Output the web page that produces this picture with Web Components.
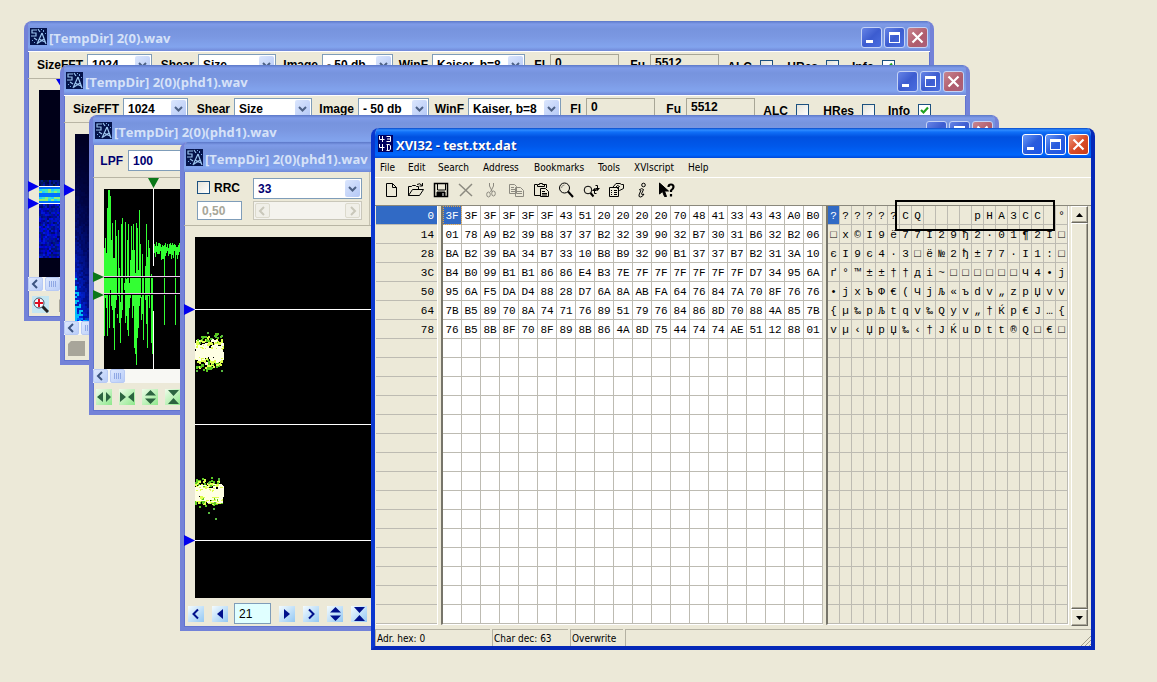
<!DOCTYPE html>
<html lang="en">
<head>
<meta charset="utf-8">
<title>XVI32 - test.txt.dat</title>
<style>
  html, body { height: 100%; }
  body { margin: 0; overflow: hidden; background: #ece9d8; font: bold 12px/14px "Liberation Sans", Arial, sans-serif; color: #000; }
</style>
</head>
<body>
<desk-top></desk-top>

<script>
const define = (name, html, setup) => {
  const tpl = document.createElement('template');
  tpl.innerHTML = html;
  customElements.define(name, class extends HTMLElement {
    connectedCallback() {
      if (this.shadowRoot) return;
      const root = this.attachShadow({ mode: 'open' });
      root.append(tpl.content.cloneNode(true));
      if (setup) setup(this, root);
    }
  });
};

// Small seeded generator, so that the plots are the same on every load.
const seeded = (seed) => () => {
  seed = (seed * 1664525 + 1013904223) % 4294967296;
  return seed / 4294967296;
};
const rect = (x, y, w, h, fill) => `<rect x="${x}" y="${y}" width="${w}" height="${h}" fill="${fill}"/>`;

/* ---------- window frame ---------- */
define('xp-window', `
<style>
  :host { --edge: #7382d8; display: flex; flex-direction: column; box-sizing: border-box; overflow: hidden;
    border-radius: 8px 8px 0 0; background: #ece9d8;
    border: 4px solid var(--edge); border-top: 0; box-shadow: inset 0 0 0 1px #6173cf; }
  header { display: flex; align-items: center; flex: none; height: 30px; margin: 0 -4px; padding: 2px 6px 0 6px; box-sizing: border-box;
    background: linear-gradient(#5c78c8 0, #7f9be8 3px, #7794de 8px, #7b98e2 16px, #82a4ee 26px, #7088d8 30px); }
  h1 { flex: 1; margin: 2px 0 0; padding-left: 2px; font: bold 13px/16px "Open Sans", "Noto Sans", sans-serif; color: #d6e2f8; white-space: nowrap; }
  .icon { display: flex; width: 17px; height: 17px; margin-top: -2px; }
  nav { display: flex; gap: 2px; }
  button { width: 21px; height: 21px; padding: 0; border: 1px solid #c5d3f5; border-radius: 3px; background: linear-gradient(135deg, #6684e6, #3c5cd0 50%, #4a6ee0); }
  button.close { background: linear-gradient(135deg, #c8858f, #b05c6c 60%, #a9607c); }
  svg { display: block; }
  main { flex: 1; min-height: 0; display: flex; flex-direction: column; }
  :host([active]) { --edge: #0a3bd6; box-shadow: none; border-color: #0a37cf; border-bottom-color: #0528b8; border-right-color: #0528b8; }
  :host([active]) header { background: linear-gradient(#0848c8 0, #2f8cff 2px, #1070f8 4px, #0050e0 9px, #0058ea 18px, #0066fc 27px, #0048d8 30px); }
  :host([active]) h1 { color: #fff; text-shadow: 1px 1px #0a2a90; }
  :host([active]) button { border-color: #fff; background: linear-gradient(135deg, #6a9af8, #2a5cdc 50%, #1c56e8); }
  :host([active]) button.close { background: linear-gradient(135deg, #ee9a80, #d94c28 50%, #c83c18); }
</style>
<header>
  <span class="icon"><slot name="icon"></slot></span>
  <h1></h1>
  <nav>
    <button type="button" aria-label="Minimize"><svg width="19" height="19"><path d="M4 12h7v3H4z" fill="#fff"/></svg></button>
    <button type="button" aria-label="Maximize"><svg width="19" height="19"><path d="M4 4h11v11H4zM5 7v7h9V7z" fill="#fff" fill-rule="evenodd"/></svg></button>
    <button type="button" class="close" aria-label="Close"><svg width="19" height="19"><path d="M4.500 4.500l10 10M14.500 4.500l-10 10" stroke="#fff" stroke-width="2.200"/></svg></button>
  </nav>
</header>
<main><slot></slot></main>`, (el, root) => { root.querySelector('h1').textContent = el.getAttribute('caption'); });

define('dish-icon', `
<style>:host { display: block; width: 17px; height: 17px; } svg { display: block; }</style>
<svg width="17" height="17" aria-hidden="true">
  <rect width="17" height="17" fill="#04134a"/>
  <path d="M7 2H2v3h4v3H1M8 1l2 3M12 5L7 16M12 5l4 11M9 11l6 3M14 11l-6 4M4 10l3 2" fill="none" stroke="#9cc4ee" stroke-width="1.200"/>
  <path d="M11 1h1v1h-1zM13 2h1v2h-1zM15 5h1v1h-1zM2 12h1v1H2zM4 14h1v1H4z" fill="#7aa8e0"/>
</svg>`);

define('hex-icon', `
<style>:host { display: block; width: 17px; height: 17px; } svg { display: block; }</style>
<svg width="17" height="17" aria-hidden="true">
  <rect x="1" width="15" height="17" fill="#000060"/>
  <path d="M2.500 1v3.500h5M5.500 1v6M9.500 1.500h4v5h-4M10 4h4M2.500 9v3.500h5M5.500 9v7M9.500 9.500h3l1 1.500v3l-1 1.500h-3M10.500 9v6" fill="none" stroke="#fff" stroke-width="1"/>
</svg>`);

/* ---------- form controls ---------- */
define('xp-combo', `
<style>
  :host { display: block; }
  label { display: flex; align-items: center; }
  .text { width: var(--label, 0); box-sizing: border-box; padding-right: 4px; text-align: right; white-space: nowrap; }
  .text:empty { padding: 0; }
  .box { position: relative; width: var(--width); height: 21px; }
  select { appearance: none; width: 100%; height: 100%; margin: 0; padding: 0 18px 0 4px; border: 1px solid #7f9db9; border-radius: 0; background: #fff; font: inherit; color: inherit; box-sizing: border-box; }
  i { position: absolute; top: 2px; right: 2px; width: 15px; height: 17px; border-radius: 2px; background: linear-gradient(135deg, #dbe6fd, #b4c8f6); pointer-events: none; }
</style>
<label><span class="text"></span><span class="box"><select><option></option></select>
<i><svg width="15" height="17"><path d="M4 7l3.500 3.500L11 7" fill="none" stroke="#4d6185" stroke-width="2"/></svg></i></span></label>`,
(el, root) => {
  root.querySelector('.text').textContent = el.getAttribute('label') || '';
  root.querySelector('option').textContent = el.getAttribute('value');
  if (!el.hasAttribute('label')) root.querySelector('select').setAttribute('aria-label', el.getAttribute('name'));
});

define('xp-text', `
<style>
  :host { display: block; }
  label { display: flex; align-items: center; }
  span { width: var(--label, 0); box-sizing: border-box; padding-right: 5px; text-align: right; white-space: nowrap; }
  span:empty { padding: 0; }
  input { width: var(--width); height: var(--height, 21px); box-sizing: border-box; margin: 0; padding: 0 4px; border: 1px solid #7f9db9; background: var(--fill, #fff); font: inherit; color: inherit; }
  :host([flat]) input { border-color: #a8a696; background: #ece9d8; padding-bottom: 3px; }
  input:disabled { color: #a8a698; }
</style>
<label><span></span><input type="text"></label>`,
(el, root) => {
  const input = root.querySelector('input');
  root.querySelector('span').textContent = el.getAttribute('label') || '';
  input.value = el.getAttribute('value');
  input.disabled = el.hasAttribute('disabled');
  if (!el.hasAttribute('label')) input.setAttribute('aria-label', el.getAttribute('name'));
});

define('xp-check', `
<style>
  :host { display: block; }
  label { display: flex; align-items: center; height: 21px; }
  span { width: var(--label); box-sizing: border-box; padding-right: 8px; text-align: right; }
  :host([after]) label { flex-direction: row-reverse; justify-content: flex-end; height: 19px; }
  :host([after]) span { padding: 0 0 0 4px; text-align: left; }
  input { appearance: none; width: 13px; height: 13px; margin: 0; border: 1px solid #1c5180; background: linear-gradient(135deg, #e4e3da, #fff); }
  :host(:not([after])) label { padding-top: 2px; }
  input:checked { background: #fff url("data:image/svg+xml,%3Csvg xmlns='http://www.w3.org/2000/svg' width='11' height='11'%3E%3Cpath d='M2 5l2.500 2.500L9 2.500' fill='none' stroke='%2321a121' stroke-width='2.200'/%3E%3C/svg%3E"); }
</style>
<label><span></span><input type="checkbox"></label>`,
(el, root) => {
  root.querySelector('span').textContent = el.getAttribute('label');
  root.querySelector('input').checked = el.hasAttribute('checked');
});

define('luna-scroll', `
<style>
  :host { display: flex; height: 14px; background: #f8f8f4; gap: 2px; }
  button { width: 15px; height: 14px; padding: 0; border: 1px solid #b8caf4; border-radius: 2px; background: linear-gradient(135deg, #dde8fe, #b9cdf8); }
  svg { display: block; }
  .end { margin-left: auto; display: none; }
  :host([disabled]) { height: 19px; border: 1px solid #c9c7ba; box-sizing: border-box; padding: 1px; background: #f4f3ee; }
  :host([disabled]) button { height: 15px; background: #f0efe8; border-color: #dcdacd; --arrow: #c9c7ba; }
  :host([disabled]) .thumb { display: none; }
  :host([disabled]) .end { display: block; }
</style>
<button type="button" aria-label="Scroll left"><svg width="13" height="12"><path d="M8 2L4 6l4 4" fill="none" stroke="var(--arrow, #3c5480)" stroke-width="2"/></svg></button>
<button type="button" class="thumb" aria-label="Thumb"><svg width="13" height="12"><path d="M3.500 3v6M5.500 3v6M7.500 3v6M9.500 3v6" stroke="#8fa8e4"/></svg></button>
<button type="button" class="end" aria-label="Scroll right"><svg width="13" height="12"><path d="M5 2l4 4-4 4" fill="none" stroke="var(--arrow, #3c5480)" stroke-width="2"/></svg></button>`);

const glyphs = {
  wide: '<path d="M7 3v10L1 8zM10 3v10l5-5z"/>',
  narrow: '<path d="M1 3v10l6-5zM15 3v10L9 8z"/>',
  tall: '<path d="M3 6.500h11L8.500 1zM3 9.500h11L8.500 15z"/>',
  flat: '<path d="M3 1h11L8.500 7zM3 15h11L8.500 9z"/>',
  first: '<path d="M10 3.500L5.500 8l4.500 4.500" fill="none" stroke="currentColor" stroke-width="2"/>',
  last: '<path d="M6 3.500L10.500 8 6 12.500" fill="none" stroke="currentColor" stroke-width="2"/>',
  back: '<path d="M11 3v10L5 8z"/>',
  next: '<path d="M5 3v10l6-5z"/>'
};
define('glyph-button', `
<style>
  :host { display: block; color: #2c6440; --tint: linear-gradient(135deg, #effcea, #8ee88c); }
  :host([blue]) { color: #00108c; --tint: linear-gradient(135deg, #f4fcff, #94c8f4); }
  button { display: block; width: 16px; height: 16px; padding: 0; border: 0; background: var(--tint); color: inherit; }
  svg { display: block; fill: currentColor; }
</style>
<button type="button"><svg width="16" height="16"></svg></button>`,
(el, root) => {
  const kind = el.getAttribute('kind');
  root.querySelector('button').setAttribute('aria-label', kind);
  root.querySelector('svg').innerHTML = glyphs[kind];
});

/* ---------- spectrum window ---------- */
define('spectrum-plot', `
<style>:host { display: block; height: 198px; overflow: hidden; } svg { display: block; width: 100%; height: 198px; }</style>
<svg aria-label="Spectrum"></svg>`, (el, root) => {
  const rnd = seeded(7);
  let out = '<rect x="11" y="11" width="100%" height="187" fill="#000018"/>';
  if (el.getAttribute('kind') === 'band') {
    for (let y = 101; y < 178; y += 2) for (let x = 11; x < 61; x += 2) {
      const blue = Math.round(110 + rnd() * 130 - (y < 106 ? 60 : 0));
      out += rect(x, y, 2, 2, `rgb(0,${Math.round(rnd() * 30)},${blue})`);
    }
    for (let y = 108; y < 123; y += 2) for (let x = 11; x < 61; x += 3) {
      const hot = y === 110 || y === 112 || y === 118 || y === 120;
      out += rect(x, y, 3, 2, hot ? ['#40e8c0', '#90f070', '#20d0ff'][Math.floor(rnd() * 3)] : '#0070ff');
    }
    out += rect(11, 107, '100%', 1, '#fff') + rect(11, 124, '100%', 1, '#fff');
    out += '<path d="M0 102v11l11-5.500zM0 119v11l11-5.500zM28 0h10l-5 8z" fill="#00e"/>';
  } else {
    for (let y = 11; y < 198; y += 2) for (let x = 11; x < 45; x += 2) {
      const low = y / 198, left = (45 - x) / 34;
      const heat = low * low * left * left * (0.5 + rnd() * 0.6);
      const floor = y > 194 ? 200 : 0;
      out += rect(x, y, 2, 2, `rgb(0,${Math.round(Math.min(230, Math.max(heat > 0.62 ? 190 : heat * 60, floor * rnd())))},${Math.round(Math.min(255, 30 + heat * 230 + low * 60 + floor * rnd()))})`);
    }
    out += '<path d="M0 61v12l11-6z" fill="#00e"/>';
  }
  root.querySelector('svg').innerHTML = out;
});

define('spectrum-view', `
<style>
  :host { display: block; }
  .tools { display: flex; height: 28px; box-sizing: border-box; padding: 2px 0 0 8px; border-bottom: 1px solid #b8b5a4; border-top: 1px solid #fff; }
  footer { display: flex; gap: 10px; padding: 5px 0 0 4px; }
  footer svg { display: block; }
</style>
<div class="tools">
  <xp-combo label="SizeFFT" value="1024" style="--label:51px;--width:65px"></xp-combo>
  <xp-combo label="Shear" value="Size" style="--label:46px;--width:78px"></xp-combo>
  <xp-combo label="Image" value="- 50 db" style="--label:46px;--width:71px"></xp-combo>
  <xp-combo label="WinF" value="Kaiser, b=8" style="--label:39px;--width:93px"></xp-combo>
  <xp-text flat label="Fl" value="0" style="--label:25px;--width:69px"></xp-text>
  <xp-text flat label="Fu" value="5512" style="--label:31px;--width:69px"></xp-text>
  <xp-check label="ALC" style="--label:41px"></xp-check>
  <xp-check label="HRes" style="--label:53px"></xp-check>
  <xp-check label="Info" checked style="--label:43px"></xp-check>
</div>
<div class="plot"></div>
<luna-scroll></luna-scroll>
<footer></footer>`, (el, root) => {
  const kind = el.getAttribute('kind');
  root.querySelector('.plot').innerHTML = `<spectrum-plot kind="${kind}"></spectrum-plot>`;
  const block = '<svg width="17" height="17"><path d="M3 1h14v15H0V4z" fill="#a8a59a"/></svg>';
  root.querySelector('footer').innerHTML = kind === 'band'
    ? `<svg width="17" height="17"><rect width="17" height="17" fill="#c4e6f2"/><path d="M10 10l6 6" stroke="#222" stroke-width="3"/><circle cx="7" cy="7" r="5" fill="#f6fbff" stroke="#456"/><path d="M3 7h8M7 3v8" stroke="#e01020" stroke-width="2"/></svg>${block}`
    : block;
});

/* ---------- filter window ---------- */
define('wave-plot', `
<style>:host { display: block; height: 191px; overflow: hidden; } svg { display: block; width: 100%; height: 191px; }</style>
<svg aria-label="Waveform"></svg>`, (el, root) => {
  const tops = [70,60,75,30,12,12,18,30,45,80,60,42,58,75,52,90,85,46,40,120,105,44,40,62,46,58,82,48,50,46,72,66,45,50,38,32,66,78,76,98,92,88,46,50,62,70,84,96,100];
  const ends = [158,120,130,158,115,150,112,128,132,150,172,130,122,140,118,145,165,140,132,120,112,145,138,152,158,130,120,116,140,128,170,176,187,160,150,128,120,142,136,162,130,122,146,170,118,130,140,165,176];
  const rnd = seeded(19);
  let out = '<rect x="11" y="11" width="100%" height="180" fill="#000"/>';
  tops.forEach((t, i) => {
    out += rect(11 + i, t, 1, ends[i] - t, '#33ff33');
    if (i % 3 === 1 && i > 6) out += rect(11 + i, t, 1, 20 + Math.round(rnd() * 50), '#000');
  });
  out += rect(60, 11, 1, 180, '#fff') + rect(60, 88, 1, 45, '#000');
  for (let i = 0; i < 120; i++) {
    const spike = [10, 21].includes(i % 26);
    const t = 64 + Math.round(rnd() * 6);
    out += rect(61 + i, t, 1, spike ? 80 : 6 + Math.round(rnd() * 8), '#33ff33');
  }
  out += '<path d="M11 99.500h200M11 116.500h200" stroke="#000"/><path d="M11 98.500h200M11 115.500h200" stroke="#f0c8f0"/>';
  out += '<path d="M0 94v10l11-5zM0 112v10l11-5zM55 0h11l-5.500 10z" fill="#0a7818"/>';
  root.querySelector('svg').innerHTML = out;
});

define('filter-view', `
<style>
  :host { display: block; }
  .tools { height: 33px; box-sizing: border-box; padding: 5px 0 0 2px; border-bottom: 1px solid #b8b5a4; color: #000070; }
  footer { display: flex; gap: 7px; padding: 6px 0 0 3px; }
</style>
<div class="tools"><xp-text label="LPF" value="100" style="--label:33px;--width:69px"></xp-text></div>
<wave-plot></wave-plot>
<luna-scroll></luna-scroll>
<footer>
  <glyph-button kind="wide"></glyph-button><glyph-button kind="narrow"></glyph-button>
  <glyph-button kind="tall"></glyph-button><glyph-button kind="flat"></glyph-button>
</footer>`);

/* ---------- phase window ---------- */
define('phase-plot', `
<style>:host { display: block; height: 372px; overflow: hidden; } svg { display: block; width: 100%; height: 372px; }</style>
<svg aria-label="Phase plot"></svg>`, (el, root) => {
  const rnd = seeded(42);
  let out = '<rect x="11" y="11" width="100%" height="361" fill="#000"/>';
  const cloud = (cy, spread, total) => {
    const dots = [];
    for (let i = 0; i < total; i++) {
      const d = (rnd() + rnd() - 1) * spread;
      dots.push([11 + Math.floor(rnd() * 27), Math.round(cy + d), Math.abs(d) / spread]);
    }
    dots.sort((a, b) => b[2] - a[2]);
    for (const [x, y, d] of dots) {
      const tone = rnd() * 0.6 + d;
      out += rect(x, y, tone < 0.7 && x < 38 ? 3 : 2, tone < 0.7 ? 3 : 2, tone < 0.65 ? '#ffffe4' : tone < 0.95 ? '#e0ff50' : '#58c820');
    }
  };
  cloud(125, 20, 330);
  cloud(266, 15, 330);
  for (const [x, y] of [[23,106],[26,112],[31,110],[37,109],[37,144],[12,144],[24,286],[29,282],[31,292],[34,252],[24,256]]) out += rect(x, y, 2, 2, '#58b840');
  out += rect(40, 90, 4, 220, '#000');
  for (const y of [83, 198, 314]) out += rect(11, y, '100%', 1, '#fff');
  out += '<path d="M0 78v11l11-5.500zM0 309v11l11-5.500z" fill="#00e"/>';
  root.querySelector('svg').innerHTML = out;
});

define('phase-view', `
<style>
  :host { display: block; }
  .tools { height: 54px; box-sizing: border-box; border-bottom: 1px solid #b8b5a4; }
  .group { display: grid; grid-template-columns: 56px 109px; grid-template-rows: 21px 19px; row-gap: 2px; width: 172px; height: 47px; padding: 6px 0 0 13px; border-right: 1px solid #c4c1b0; }
  .navy { color: #000070; }
  footer { display: grid; grid-template-columns: 24px 22px 45px 24px 24px 24px 24px; align-items: center; padding: 5px 0 0 4px; }
  footer xp-text { font-weight: normal; }
</style>
<div class="tools"><div class="group">
  <xp-check after label="RRC" style="--label:32px"></xp-check>
  <xp-combo class="navy" name="Factor" value="33" style="--width:109px"></xp-combo>
  <xp-text disabled name="Roll-off" value="0,50" style="--width:45px;--height:19px"></xp-text>
  <luna-scroll disabled></luna-scroll>
</div></div>
<phase-plot></phase-plot>
<footer>
  <glyph-button blue kind="first"></glyph-button><glyph-button blue kind="back"></glyph-button>
  <xp-text name="Position" value="21" style="--width:37px;--fill:#e0ffff"></xp-text>
  <glyph-button blue kind="next"></glyph-button><glyph-button blue kind="last"></glyph-button>
  <glyph-button blue kind="tall"></glyph-button><glyph-button blue kind="flat"></glyph-button>
</footer>`);

/* ---------- hex editor ---------- */
define('menu-bar', `
<style>
  :host { display: block; border-bottom: 1px solid #fff; }
  nav { display: grid; grid-template-columns: 28px 30px 45px 51px 64px 36px 54px auto; justify-content: start; height: 19px; padding-left: 5px; }
  button { padding: 0; border: 0; background: none; font: 10px/18px "DejaVu Sans Condensed", "DejaVu Sans", sans-serif; text-align: left; color: #000; }
</style>
<nav></nav>`, (el, root) => {
  root.querySelector('nav').innerHTML = ['File', 'Edit', 'Search', 'Address', 'Bookmarks', 'Tools', 'XVIscript', 'Help']
    .map((t) => `<button type="button">${t}</button>`).join('');
});

define('tool-bar', `
<style>
  :host { display: flex; gap: 1px; height: 27px; box-sizing: border-box; padding: 0 0 2px 4px; align-items: center; }
  button { width: 24px; height: 22px; padding: 0; border: 0; background: none; display: grid; place-items: center; }
  svg { display: block; fill: none; stroke: #000; margin-top: -2px; }
</style>`, (el, root) => {
  const grey = 'stroke="#8c8a80"';
  const icons = {
    New: '<path d="M3.500 1.500h6l4 4v9h-10zM9.500 1.500v4h4"/>',
    Open: '<path d="M.500 13.500v-9h3l1-1h3l1 1h2v3M.500 13.500l4-6h11l-4 6zM9 2.500q3-2 5 1M14.500 1v3h-3"/>',
    Save: '<path d="M1.500 1.500h13v13h-13z" stroke-width="1.500"/><path d="M4.500 2v6h8V2"/><path d="M4 10h8v4H4z" fill="#000"/><path d="M10 11v3" stroke="#fff"/>',
    Delete: `<path d="M1 2l13 12M14 2L2 14" ${grey} stroke-width="1.500"/>`,
    Cut: `<g ${grey}><path d="M6.500 1v3l3 6M10.500 1v3l-3 6"/><ellipse cx="5.500" cy="12.500" rx="1.800" ry="2.500"/><ellipse cx="10.500" cy="11.500" rx="1.800" ry="2.500"/></g>`,
    Copy: `<g ${grey}><path d="M1.500 2.500h5l2 2v7h-7zM7.500 5.500h5l3 3v6h-8zM3 5.500h3M3 7.500h4M3 9.500h4M9 9.500h5M9 11.500h5"/></g>`,
    Paste: '<path d="M4 2.500H1.500v11H7M11 2.500h2.500V6M4.500 4.500v-2h2v-1h3v1h2v2z"/><path d="M7.500 6.500h5l3 3v5h-8zM9 9.500h3M9 11.500h5M9 13h5"/>',
    Find: '<circle cx="6.500" cy="6" r="5"/><path d="M3.500 6q0-3 3-3" stroke="#8c8a80"/><path d="M10 9.500l5 5.500" stroke-width="2"/>',
    Replace: '<circle cx="5" cy="8" r="3.800"/><path d="M7.500 11l3 3.500" stroke-width="2"/><path d="M12.500 3.500h2v3M13.500 11.500h-2v-3"/><path d="M12 6h5l-2.500 3zM9 9h5l-2.500-3z" fill="#000" stroke="none"/>',
    Properties: '<path d="M1.500 5.500h9v9h-9zM3 8.500h1M6 8.500h3M3 10.500h1M6 10.500h3M3 12.500h1M6 12.500h3"/><path d="M5 5l3-3.500h4l1.500 1h2v4l-4 2-2-2 2-2-2-1-2 2"/>',
    Info: '<circle cx="10.500" cy="3" r="1.800"/><path d="M6 8q3-2.500 4.500-.500L8.500 12q0 1.500 2.500 0-1.500 3-3.500 3T6 13l2-5"/>',
    Help: '<path d="M1.500 1v11l3-2.500 2 5h2l-2-5.500h4z" fill="#000"/><path d="M10.500 5q0-2.500 2.500-2.500t2.500 2.500q0 1.500-2.500 3.500v1.500M13 12v2.500" stroke-width="2.200"/>'
  };
  for (const [name, art] of Object.entries(icons)) {
    root.innerHTML += `<button type="button" aria-label="${name}"><svg width="17" height="16">${art}</svg></button>`;
  }
});

define('hex-panes', `
<style>
  :host { display: flex; height: 421px; border-top: 1px solid #8a887c; box-sizing: border-box; font: 11px/16px "Liberation Mono", "Courier New", monospace; }
  table { border-collapse: separate; border-spacing: 0; table-layout: fixed; }
  td, th { box-sizing: border-box; height: 19px; padding: 2px 0 0; overflow: hidden; border-bottom: 1px solid #bdbbb2; border-right: 1px solid #bdbbb2; text-align: center; font-weight: normal; white-space: pre; }
  .on { background: #316ac5; color: #fff; }
  .pane { height: 418px; border-bottom: 1px solid #fff; }
  .address { margin-left: 1px; border-right: 1px solid #fff; }
  .address table { width: 61px; }
  .address th { padding-right: 3px; border-right: 0; text-align: right; }
  .hex { margin-left: 3px; border-left: 2px solid #77756a; background: #fff; }
  .hex table { width: 380px; }
  .hex .on { outline: 1px dotted #d8a050; outline-offset: -1px; }
  .chars { margin-left: 3px; border-left: 2px solid #77756a; border-right: 1px solid #fff; }
  .chars table { width: 240px; }
  .bar { margin-left: 2px; width: 17px; display: flex; flex-direction: column; }
  .bar button { flex: none; height: 17px; padding: 0; border: 1px solid; border-color: #fff #6c6a60 #6c6a60 #fff; background: #ece9d8; box-shadow: inset -1px -1px #aca899; }
  .bar .thumb { flex: 1; }
  svg { display: block; margin: auto; }
</style>
<div class="pane address"><table aria-label="Address"></table></div>
<div class="pane hex"><table aria-label="Hex"></table></div>
<div class="pane chars"><table aria-label="Characters"></table></div>
<div class="bar">
  <button type="button" aria-label="Scroll up"><svg width="7" height="4"><path d="M0 4h7L3.500 0z"/></svg></button>
  <button type="button" class="thumb" aria-label="Thumb"></button>
  <button type="button" aria-label="Scroll down"><svg width="7" height="4"><path d="M0 0h7L3.500 4z"/></svg></button>
</div>`, (el, root) => {
  const lines = `3F 3F 3F 3F 3F 3F 43 51 20 20 20 20 70 48 41 33 43 43 A0 B0
01 78 A9 B2 39 B8 37 37 B2 32 39 90 32 B7 30 31 B6 32 B2 06
BA B2 39 BA 34 B7 33 10 B8 B9 32 90 B1 37 37 B7 B2 31 3A 10
B4 B0 99 B1 B1 86 86 E4 B3 7E 7F 7F 7F 7F 7F 7F D7 34 95 6A
95 6A F5 DA D4 88 28 D7 6A 8A AB FA 64 76 84 7A 70 8F 76 76
7B B5 89 70 8A 74 71 76 89 51 79 76 84 86 8D 70 88 4A 85 7B
76 B5 8B 8F 70 8F 89 8B 86 4A 8D 75 44 74 74 AE 51 12 88 01`.split('\n').map((l) => l.split(' '));
  const decoder = new TextDecoder('windows-1251');
  const toChar = (hex) => {
    const code = parseInt(hex, 16);
    return code < 32 || code === 127 ? '\u25A1' : decoder.decode(new Uint8Array([code]));
  };
  const [address, hex, chars] = root.querySelectorAll('table');
  for (let r = 0; r < 22; r++) {
    const bytes = lines[r] || Array(20).fill('');
    const head = address.insertRow().appendChild(document.createElement('th'));
    head.scope = 'row';
    head.textContent = lines[r] ? (r * 20).toString(16).toUpperCase() : '';
    const hexRow = hex.insertRow(), charRow = chars.insertRow();
    bytes.forEach((b) => {
      hexRow.insertCell().textContent = b;
      charRow.insertCell().textContent = b && toChar(b);
    });
  }
  for (const t of [address, hex, chars]) t.rows[0].cells[0].className = 'on';
});

define('status-bar', `
<style>
  :host { display: grid; grid-template-columns: 115px 76px 53px 1fr; gap: 2px; margin-top: 3px; height: 17px; font: 10px/17px "DejaVu Sans Condensed", "DejaVu Sans", sans-serif; }
  span { padding-left: 1px; border-left: 1px solid #b4b1a2; border-top: 1px solid #b4b1a2; white-space: nowrap; }
  span:first-child { border-left: 0; }
  .grip { display: flex; justify-content: flex-end; align-items: flex-end; }
  svg { display: block; }
</style>
<span>Adr. hex: 0</span><span>Char dec: 63</span><span>Overwrite</span>
<span class="grip"><svg width="11" height="13"><path d="M0 13L12 1M4 13l9-9M8 13l5-5" stroke="#a09d8c"/></svg></span>`);

/* ---------- desktop ---------- */
define('desk-top', `
<style>
  :host { display: block; position: relative; min-height: 100%; }
  xp-window { position: absolute; }
  .one { left: 24px; top: 21px; width: 910px; height: 300px; }
  .two { left: 60px; top: 65px; width: 910px; height: 300px; }
  .three { left: 89px; top: 115px; width: 910px; height: 300px; }
  .four { left: 180px; top: 142px; width: 800px; height: 489px; }
  .five { left: 371px; top: 128px; width: 724px; height: 522px; }
  .mark { position: absolute; left: 895px; top: 200px; width: 156px; height: 27px; border: 2px solid #000; }
</style>
<xp-window class="one" caption="[TempDir] 2(0).wav"><dish-icon slot="icon"></dish-icon><spectrum-view kind="band"></spectrum-view></xp-window>
<xp-window class="two" caption="[TempDir] 2(0)(phd1).wav"><dish-icon slot="icon"></dish-icon><spectrum-view kind="noise"></spectrum-view></xp-window>
<xp-window class="three" caption="[TempDir] 2(0)(phd1).wav"><dish-icon slot="icon"></dish-icon><filter-view></filter-view></xp-window>
<xp-window class="four" caption="[TempDir] 2(0)(phd1).wav"><dish-icon slot="icon"></dish-icon><phase-view></phase-view></xp-window>
<xp-window class="five" active caption="XVI32 - test.txt.dat"><hex-icon slot="icon"></hex-icon>
  <menu-bar></menu-bar><tool-bar></tool-bar><hex-panes></hex-panes><status-bar></status-bar>
</xp-window>
<div class="mark"></div>`);
</script>
</body>
</html>
